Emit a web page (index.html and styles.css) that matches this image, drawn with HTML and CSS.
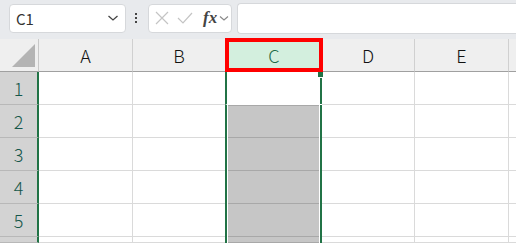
FILE: index.html
```html
<!DOCTYPE html>
<html lang="ja">
<head>
    <meta charset="UTF-8">
    <title>Sheet</title>
    <link rel="stylesheet" href="styles.css">
</head>
<body>
    <div class="toolbar">
        <div class="namebox">
            <span>C1</span>
            <svg width="12" height="8" viewBox="0 0 12 8"><path d="M1.5 2 L6 6 L10.5 2" fill="none" stroke="#444" stroke-width="1.3"/></svg>
        </div>
        <div class="dots"><i></i><i></i><i></i></div>
        <div class="fxbox">
            <svg width="16" height="16" viewBox="0 0 16 16"><path d="M2 2 L14 14 M14 2 L2 14" stroke="#c4c4c4" stroke-width="1.2"/></svg>
            <svg width="18" height="16" viewBox="0 0 18 16"><path d="M2 8 L7 13 L16 3" fill="none" stroke="#c4c4c4" stroke-width="1.2"/></svg>
            <span class="fx">fx</span>
            <svg width="10" height="7" viewBox="0 0 10 7"><path d="M1 1.5 L5 5 L9 1.5" fill="none" stroke="#888" stroke-width="1.1"/></svg>
        </div>
        <div class="formula"></div>
    </div>

    <div class="sheet">
        <div class="corner"><span class="tri"></span></div>
        <div class="colhead">A</div>
        <div class="colhead">B</div>
        <div class="colhead sel">C</div>
        <div class="colhead">D</div>
        <div class="colhead">E</div>
        <div class="colhead last"></div>

        <div class="rowhead">1</div>
        <div class="cell"></div><div class="cell"></div><div class="cell active"><span class="handle"></span></div><div class="cell"></div><div class="cell"></div><div class="cell last"></div>
        <div class="rowhead">2</div>
        <div class="cell"></div><div class="cell"></div><div class="cell picked first"></div><div class="cell"></div><div class="cell"></div><div class="cell last"></div>
        <div class="rowhead">3</div>
        <div class="cell"></div><div class="cell"></div><div class="cell picked"></div><div class="cell"></div><div class="cell"></div><div class="cell last"></div>
        <div class="rowhead">4</div>
        <div class="cell"></div><div class="cell"></div><div class="cell picked"></div><div class="cell"></div><div class="cell"></div><div class="cell last"></div>
        <div class="rowhead">5</div>
        <div class="cell"></div><div class="cell"></div><div class="cell picked"></div><div class="cell"></div><div class="cell"></div><div class="cell last"></div>
        <div class="rowhead"></div>
        <div class="cell"></div><div class="cell"></div><div class="cell picked"></div><div class="cell"></div><div class="cell"></div><div class="cell last"></div>
    </div>
</body>
</html>
```

FILE: styles.css
```css
body {
    margin: 0;
    padding: 0;
    background: #ffffff;
    font-family: "Noto Sans CJK JP", "Noto Sans", sans-serif;
    overflow: hidden;
}
.toolbar {
    display: flex;
    align-items: center;
    height: 39px;
    padding: 0 0 0 9px;
    background: #e8eaed;
    box-sizing: border-box;
}
.namebox {
    display: flex;
    align-items: center;
    justify-content: space-between;
    flex: none;
    width: 117px;
    height: 29px;
    margin-top: -3px;
    padding: 0 6px 0 6px;
    box-sizing: border-box;
    background: #ffffff;
    border: 1px solid #d6d8db;
    border-radius: 4px;
    font-size: 15px;
    color: #333;
}
.dots {
    display: flex;
    flex-direction: column;
    flex: none;
    gap: 2px;
    margin: -3px 11px 0 9px;
}
.dots i {
    width: 2px;
    height: 2px;
    background: #444;
}
.fxbox {
    display: flex;
    align-items: center;
    flex: none;
    gap: 6px;
    width: 84px;
    height: 29px;
    margin-top: -3px;
    padding: 0 0 0 5px;
    box-sizing: border-box;
    background: #ffffff;
    border: 1px solid #d6d8db;
    border-radius: 4px;
}
.fx {
    font-family: "Liberation Serif", serif;
    font-style: italic;
    font-weight: bold;
    font-size: 17px;
    color: #444;
    margin-left: 3px;
    margin-right: -4px;
}
.formula {
    flex: 1;
    height: 29px;
    margin: -3px 0 0 5px;
    background: #ffffff;
    border: 1px solid #d6d8db;
    border-right: none;
    border-radius: 4px 0 0 4px;
}
.sheet {
    display: grid;
    grid-template-columns: 39px 94px 93px 96px 93px 94px 7px;
    grid-template-rows: 33px repeat(5, 33px) 6px;
    font-size: 18px;
}
.corner {
    position: relative;
    background: #efefef;
    border-right: 1px solid #c8c8c8;
    border-bottom: 1px solid #a0a0a0;
}
.tri {
    position: absolute;
    right: 3px;
    bottom: 4px;
    width: 0;
    height: 0;
    border-left: 23px solid transparent;
    border-bottom: 23px solid #b4b4b4;
}
.colhead {
    display: flex;
    align-items: center;
    justify-content: center;
    background: #efefef;
    border-right: 1px solid #d0d0d0;
    border-bottom: 1px solid #a0a0a0;
    color: #111;
    font-weight: 300;
}
.colhead.last {
    border-right: none;
}
.colhead.sel {
    position: relative;
    background: #d3efde;
    color: #1b6a47;
    border: 4px solid #ff0000;
    margin: -1px -1px 0 -1px;
}
.rowhead {
    display: flex;
    align-items: center;
    justify-content: center;
    background: #d3d3d3;
    border-right: 2px solid #217346;
    border-bottom: 1px solid #b8b8b8;
    color: #16574a;
    font-weight: 300;
}
.cell {
    border-right: 1px solid #dadada;
    border-bottom: 1px solid #dadada;
}
.cell.last {
    border-right: none;
}
.cell.active,
.cell.picked {
    border-left: 2px solid #217346;
    border-right: 2px solid #217346;
    border-bottom: none;
    margin-left: -1px;
    position: relative;
}
.cell.picked {
    background: #c6c6c6;
    box-shadow: inset 1px 0 0 #ffffff, inset -1px 0 0 #ffffff, inset 0 -1px 0 #a8a8a8;
}
.cell.picked.first {
    box-shadow: inset 1px 0 0 #ffffff, inset -1px 0 0 #ffffff, inset 0 1px 0 #a8a8a8, inset 0 -1px 0 #a8a8a8;
}
.cell.active {
    border-bottom: 1px solid #ffffff;
    border-right-color: transparent;
}
.handle {
    position: absolute;
    top: 0;
    right: -3px;
    width: 5px;
    height: 5px;
    background: #217346;
    box-shadow: 0 6px 0 -3px #ffffff;
}
.cell.active::after {
    content: "";
    position: absolute;
    top: 6px;
    bottom: 0;
    right: -2px;
    width: 2px;
    background: #217346;
}
```
